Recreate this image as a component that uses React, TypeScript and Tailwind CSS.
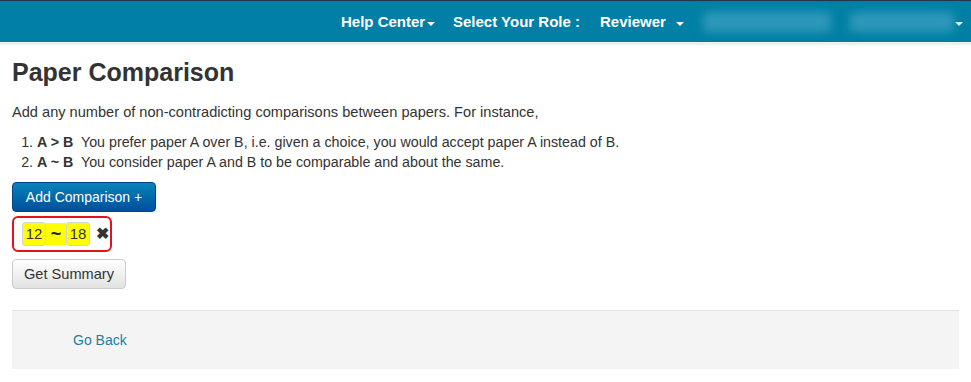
import React from "react";

const Caret = () => (
  <span className="inline-block w-0 h-0 border-l-[4px] border-r-[4px] border-t-[4px] border-l-transparent border-r-transparent border-t-white align-middle" />
);

export default function App() {
  return (
    <div className="min-h-[382px] bg-white text-[#333] text-[14px] leading-[20px]" style={{ fontFamily: '"Liberation Sans", Arial, sans-serif' }}>
      {/* header */}
      <div className="border-t border-[#22384a] bg-[#017fa4] h-[42px] flex items-center text-white font-bold text-[15px] pl-[341px]">
        <div className="w-[112px] flex items-center">
          <span>Help Center</span>
          <span className="ml-[2px] mt-[2px]"><Caret /></span>
        </div>
        <div className="w-[147px]">Select Your Role :</div>
        <div className="w-[103px] flex items-center">
          <span>Reviewer</span>
          <span className="ml-[10px] mt-[2px]"><Caret /></span>
        </div>
        <div className="w-[147px] h-[22px] flex items-center">
          <span className="block w-[128px] h-[20px] rounded bg-[#2e98ba] blur-[5px]" />
        </div>
        <div className="w-[105px] h-[22px] flex items-center">
          <span className="block w-[104px] h-[20px] rounded bg-[#2e98ba] blur-[5px]" />
        </div>
        <span className="mt-[2px]"><Caret /></span>
      </div>
      <div className="h-[3px] bg-[#eff1f1]" />

      <div className="px-3">
        <h1 className="text-[25px] leading-[26px] font-bold mt-[14px] mb-[17px] text-[#333]">Paper Comparison</h1>
        <p className="mb-[10px] text-[14.6px]">Add any number of non-contradicting comparisons between papers. For instance,</p>
        <ol className="list-decimal pl-[25px] mb-[10px] text-[14.25px]">
          <li><b>A &gt; B</b>&nbsp; You prefer paper A over B, i.e. given a choice, you would accept paper A instead of B.</li>
          <li><b>A ~ B</b>&nbsp; You consider paper A and B to be comparable and about the same.</li>
        </ol>

        <button className="h-[30px] w-[144px] rounded-[4px] text-white text-[14px] bg-gradient-to-b from-[#0a84b8] to-[#004f9d] border border-[#00458a]">
          Add Comparison +
        </button>

        <div className="mt-[4px] w-[100px] h-[36px] border-2 border-[#e4131b] rounded-[6px] flex items-center pl-[8px]">
          <span className="h-[24px] w-[24px] flex items-center justify-center bg-[#ffff00] border border-[#d4d4d4] rounded-[3px] text-[15px]">12</span>
          <span className="h-[22px] w-[20px] flex items-center justify-center bg-[#ffff00] font-bold text-[18px] text-[#222]">~</span>
          <span className="h-[24px] w-[24px] flex items-center justify-center bg-[#ffff00] border border-[#d4d4d4] rounded-[3px] text-[15px]">18</span>
          <span className="ml-[6px] text-[16px] text-[#333] font-bold">✖</span>
        </div>

        <button className="mt-[7px] h-[30px] w-[114px] rounded-[4px] text-[#333] text-[14.6px] bg-gradient-to-b from-[#ffffff] to-[#e2e2e2] border border-[#cccccc]">
          Get Summary
        </button>

        <div className="mt-[21px] h-[59px] bg-[#f4f4f4] border-t border-[#e2e2e2] flex items-center pl-[61px]">
          <a className="text-[#1a7fa7] text-[14px]">Go Back</a>
        </div>
      </div>
    </div>
  );
}
